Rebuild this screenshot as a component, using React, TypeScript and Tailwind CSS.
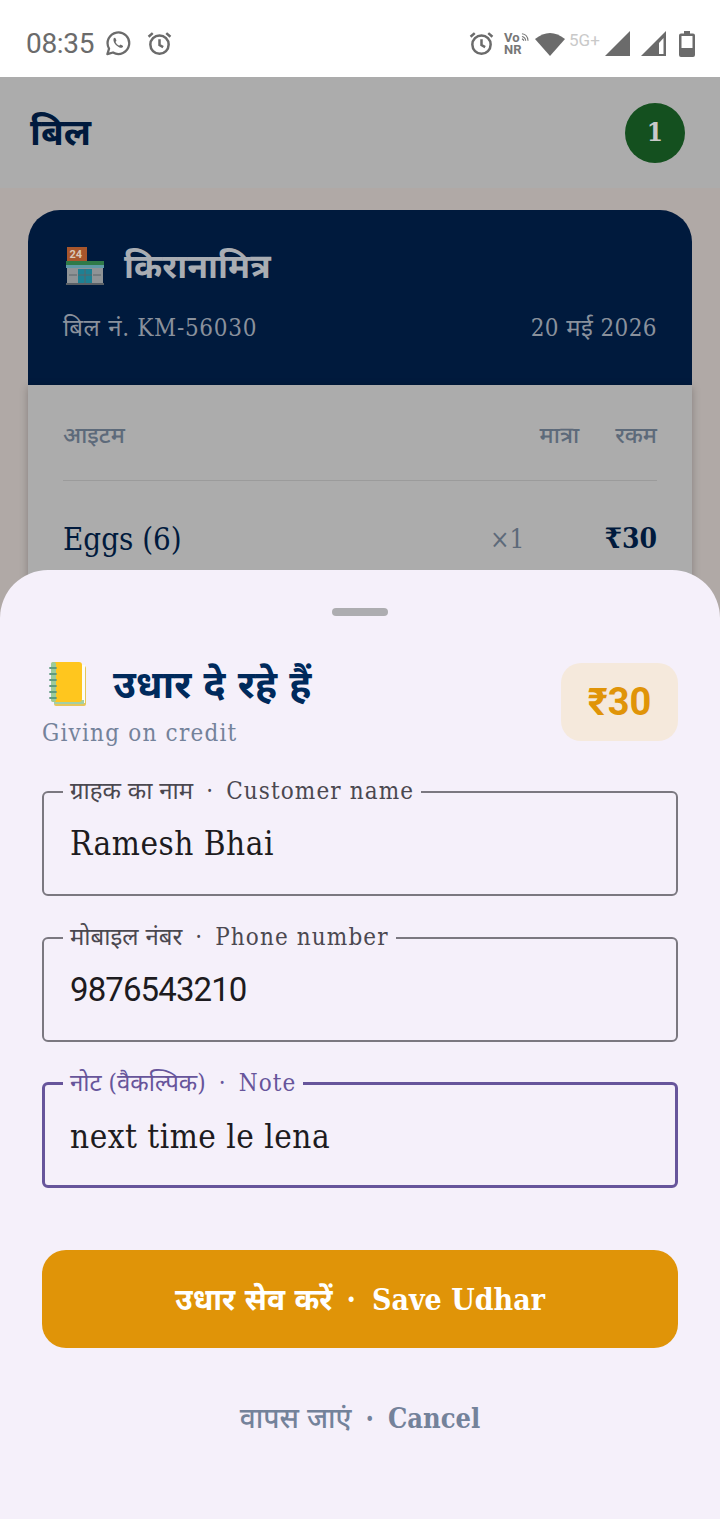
const serif = "font-['DejaVu_Serif_Condensed','DejaVu_Serif','Noto_Sans_Devanagari',serif]";

const WhatsApp = () => (
  <svg width="27" height="27" viewBox="0 0 24 24" fill="none" stroke="#6b6b6b" strokeWidth="2">
    <path d="M3 21.500l1.500-5A9.600 9.600 0 1 1 8 20z" strokeLinejoin="round" />
    <path
      d="M8.500 7.500c1-1 1.600-.6 2 .4l.5 1.200c.2.500-.7 1.200-.8 1.600.5 1.300 1.900 2.700 3.300 3.200.5-.2 1-1.100 1.600-.9l1.300.7c.8.400.8 1-.2 1.900-2 1.300-8.800-3.500-7.700-8.100z"
      fill="#6b6b6b"
      stroke="none"
    />
  </svg>
);

const Alarm = () => (
  <svg width="25" height="25" viewBox="0 0 24 24" fill="none" stroke="#6b6b6b" strokeWidth="2.400">
    <circle cx="12" cy="13" r="8.800" />
    <path d="M12 8v5.500l3.500 2M1.500 5.500L5.500 2M22.500 5.500l-4-3.500" />
  </svg>
);

const VoNR = () => (
  <div className="ml-[10px] w-[25px] flex flex-col font-['Roboto',sans-serif] font-bold text-[13px] leading-[12px] text-[#777]">
    <div className="flex items-start">
      <span>Vo</span>
      <svg className="ml-[1px]" width="9" height="10" viewBox="0 0 9 10" fill="none" stroke="#777" strokeWidth="1.200">
        <path d="M1 1.500Q7 2 7.500 9M1 4.500Q4.500 5 5 9M1 7Q2.500 7.500 3 9" />
      </svg>
    </div>
    <span>NR</span>
  </div>
);

const StatusBar = () => (
  <div className="h-[77px] bg-white flex items-center justify-between pl-[26px] pr-[25px] pt-[10px] shrink-0">
    <div className="flex items-center">
      <span className="font-['Roboto',sans-serif] text-[28px] text-[#6b6b6b] tracking-[-0.3px]">08:35</span>
      <span className="ml-[10px] flex"><WhatsApp /></span>
      <span className="ml-[16px] flex"><Alarm /></span>
    </div>
    <div className="flex items-center">
      <Alarm />
      <VoNR />
      <svg className="ml-[6px]" width="30" height="26" viewBox="0 0 30 26">
        <path d="M0 8Q15 -4 30 8L15 25z" fill="#6b6b6b" />
      </svg>
      <span className="ml-[4px] w-[31px] font-['Roboto',sans-serif] text-[17px] leading-[20px] text-[#c9c9c9] mb-[8px]">5G+</span>
      <svg className="ml-[5px]" width="25" height="25" viewBox="0 0 25 25">
        <path d="M0 25L25 0V25z" fill="#6b6b6b" />
      </svg>
      <svg className="ml-[11px]" width="25" height="25" viewBox="0 0 25 25">
        <path d="M0 25L25 0V25z" fill="#6b6b6b" />
        <path d="M18 12L22.500 7V23H18z" fill="#fff" />
      </svg>
      <svg className="ml-[13px]" width="16" height="26" viewBox="0 0 16 26">
        <path d="M5 0h6v2.500h3a2 2 0 0 1 2 2V24a2 2 0 0 1-2 2H2a2 2 0 0 1-2-2V4.500a2 2 0 0 1 2-2h3z" fill="#6b6b6b" />
        <rect x="2.500" y="5" width="11" height="12" fill="#fff" />
      </svg>
    </div>
  </div>
);

const Shop = () => (
  <svg width="38" height="38" viewBox="0 0 38 38">
    <rect x="1" y="0" width="20" height="14" fill="#a8562c" />
    <text x="3.500" y="11" fontSize="11" fontWeight="700" fill="#d9c8b8" fontFamily="Roboto, sans-serif">24</text>
    <rect x="0" y="14" width="38" height="4" fill="#2f7a48" />
    <rect x="0" y="18" width="38" height="3" fill="#5f9aa6" />
    <rect x="1" y="21" width="36" height="15" fill="#8f9396" />
    <rect x="12" y="22" width="14" height="14" fill="#1e8194" />
    <path d="M19 22v14M12 28h14M3 28h8M27 28h8" stroke="#5a6468" strokeWidth="1" />
    <rect x="0" y="36" width="38" height="2" fill="#5a6066" />
  </svg>
);

const Notebook = () => (
  <svg width="37" height="44" viewBox="0 0 37 44">
    <rect x="5" y="4" width="32" height="40" rx="2" fill="#e6c65a" />
    <rect x="32" y="3" width="4" height="38" fill="#fdfdf5" />
    <rect x="5" y="38" width="30" height="4" fill="#a3cfa5" />
    <rect x="2" y="0" width="31" height="40" rx="3" fill="#ffc61e" />
    <rect x="2" y="0" width="5" height="40" rx="2" fill="#9ccb9a" />
    <path d="M1 6h6M1 12h6M1 18h6M1 24h6M1 30h6M1 36h6" stroke="#5f9a80" strokeWidth="1.800" strokeLinecap="round" />
  </svg>
);

const Field = ({
  hi,
  en,
  value,
  active,
  numeric,
}: {
  hi: string;
  en: string;
  value: string;
  active?: boolean;
  numeric?: boolean;
}) => (
  <fieldset
    className={
      active
        ? "h-[119px] border-[3px] border-[#67559b] rounded-[6px] px-[18px] m-0"
        : "h-[119px] border-2 border-[#7b7880] rounded-[6px] px-[19px] m-0"
    }
  >
    <legend
      className={
        active
          ? "px-[7px] text-[24px] leading-[29px] text-[#67559b] tracking-[1.1px] whitespace-nowrap"
          : "px-[7px] text-[24px] leading-[29px] text-[#4b4850] tracking-[1.1px] whitespace-nowrap"
      }
    >
      <span className="tracking-normal">{hi}</span>
      <span className="ml-[13px] mr-[12px]">·</span>
      {en}
    </legend>
    <div
      className={
        numeric
          ? "pl-[7px] pt-[16px] font-['Roboto',sans-serif] text-[33px] leading-[44px] text-[#1d1b20] tracking-[-0.9px]"
          : active
            ? "pl-[7px] pt-[17px] text-[33px] leading-[44px] text-[#1d1b20] tracking-[0.5px]"
            : "pl-[7px] pt-[16px] text-[33px] leading-[44px] text-[#1d1b20] tracking-[0.5px]"
      }
    >
      {value}
    </div>
  </fieldset>
);

export default function App() {
  return (
    <div className={`relative w-[720px] h-[1519px] overflow-hidden bg-[#b0a9a6] flex flex-col ${serif}`}>
      <StatusBar />

      {/* page behind the sheet, dimmed */}
      <div className="h-[111px] bg-[#acacac] flex items-center justify-between pl-[30px] pr-[35px] shrink-0">
        <span className="text-[37px] font-bold text-[#001a3d]">बिल</span>
        <div className="w-[60px] h-[60px] rounded-full bg-[#14501f] flex items-center justify-center text-[26px] font-bold text-[#c9c9c9]">
          1
        </div>
      </div>

      <div className="mx-[28px] mt-[22px]">
        <div className="h-[175px] bg-[#001a3d] rounded-t-[32px] px-[35px] pt-[34px]">
          <div className="flex items-center h-[44px]">
            <span className="ml-[3px] flex"><Shop /></span>
            <span className="ml-[20px] text-[34px] font-bold text-[#a9adb3]">किरानामित्र</span>
          </div>
          <div className="flex items-center justify-between mt-[24px] text-[24px] leading-[32px] text-[#8a919c] tracking-[0.7px]">
            <span>बिल नं. KM-56030</span>
            <span className="tracking-[0.4px]">20 मई 2026</span>
          </div>
        </div>
        <div className="bg-[#acacac] h-[300px] px-[35px] shadow-[0_2px_8px_rgba(0,0,0,0.25)]">
          <div className="flex h-[96px] pt-[6px] items-center border-b border-[#9b9b9b] text-[23px] text-[#5d6a7a] font-medium">
            <span className="flex-1">आइटम</span>
            <span>मात्रा</span>
            <span className="ml-[36px]">रकम</span>
          </div>
          <div className="flex items-center h-[116px] text-[#001a3d]">
            <span className="flex-1 text-[31px]">Eggs (6)</span>
            <span className="text-[26px] text-[#5d6a7a]">×1</span>
            <span className="ml-[80px] text-[28px] font-bold">₹30</span>
          </div>
        </div>
      </div>

      {/* bottom sheet */}
      <div className="absolute left-0 right-0 bottom-0 top-[570px] bg-[#f5f0fa] rounded-t-[48px] px-[42px]">
        <div className="w-[56px] h-[8px] rounded-full bg-[#adadb0] mx-auto mt-[38px]" />
        <div className="flex items-start justify-between mt-[42px]">
          <div>
            <div className="flex items-center h-[52px]">
              <span className="ml-[7px] flex"><Notebook /></span>
              <span className="ml-[27px] text-[39px] font-bold text-[#002a5c]">उधार दे रहे हैं</span>
            </div>
            <div className="mt-[7px] text-[24px] leading-[32px] text-[#74829a] tracking-[1.2px]">Giving on credit</div>
          </div>
          <div className="mt-[5px] w-[117px] h-[78px] rounded-[20px] bg-[#f5e9dc] flex items-center justify-center font-['Roboto',sans-serif] font-bold text-[38px] text-[#e09408]">
            ₹30
          </div>
        </div>

        <div className="flex flex-col gap-[27px] mt-[28px]">
          <Field hi="ग्राहक का नाम" en="Customer name" value="Ramesh Bhai" />
          <Field hi="मोबाइल नंबर" en="Phone number" value="9876543210" numeric />
          <Field hi="नोट (वैकल्पिक)" en="Note" value="next time le lena" active />
        </div>

        <div className="mt-[62px] h-[98px] rounded-[24px] bg-[#e09408] flex items-center justify-center text-[30px] font-bold text-white">
          <span>उधार सेव करें</span>
          <span className="ml-[14px] mr-[16px]">·</span>
          <span>Save Udhar</span>
        </div>

        <div className="mt-[50px] flex items-center justify-center text-[27px] font-bold text-[#74829a]">
          <span className="text-[28px] font-medium">वापस जाएं</span>
          <span className="ml-[14px] mr-[14px]">·</span>
          <span>Cancel</span>
        </div>
      </div>
    </div>
  );
}
